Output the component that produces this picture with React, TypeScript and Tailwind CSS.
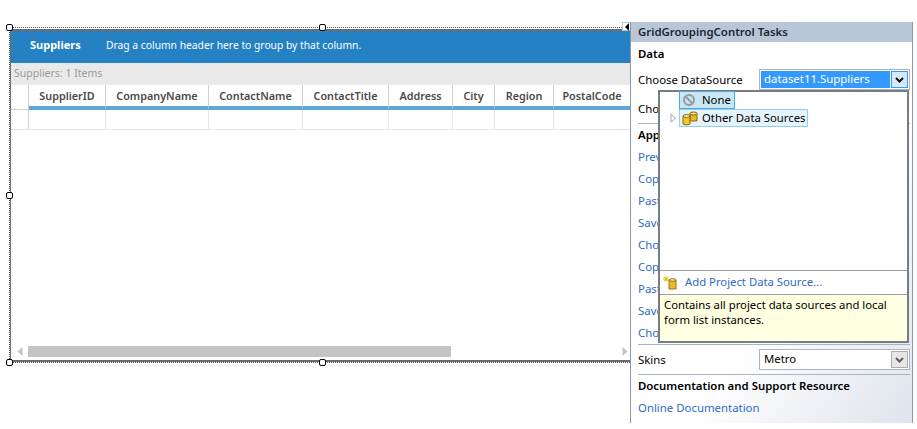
const columns = [
  { name: 'SupplierID', width: 'w-[77px]' },
  { name: 'CompanyName', width: 'w-[103px]' },
  { name: 'ContactName', width: 'w-[94px]' },
  { name: 'ContactTitle', width: 'w-[86px]' },
  { name: 'Address', width: 'w-[64px]' },
  { name: 'City', width: 'w-[42px]' },
  { name: 'Region', width: 'w-[59px]' },
  { name: 'PostalCode', width: 'w-[77px]' },
];

const hiddenLinks = ['Preview', 'Copy', 'Paste', 'Save', 'Choose', 'Copy', 'Paste', 'Save', 'Choose'];

function Handle({ className }: { className: string }) {
  return <div className={`absolute w-[7px] h-[7px] bg-white border border-black rounded-[2px] ${className}`} />;
}

function Chevron({ color }: { color: string }) {
  return (
    <svg width="9" height="6" viewBox="0 0 9 6">
      <path d="M1 1 L4.5 4.5 L8 1" fill="none" stroke={color} strokeWidth="2" />
    </svg>
  );
}

function Combo({ selected, value }: { selected?: boolean; value: string }) {
  return (
    <div className="w-[151px] h-[21px] bg-white border border-[#abb4c1] flex items-stretch p-px">
      <div className={`flex-1 pl-[3px] leading-[15px] ${selected ? 'bg-[#3399ff] text-white' : 'text-black'}`}>{value}</div>
      <div
        className={`w-[17px] flex items-center justify-center border ml-px ${
          selected ? 'bg-[#d5e9fa] border-[#3399ff]' : 'bg-[#e6e6e6] border-[#acacac]'
        }`}
      >
        <Chevron color={selected ? '#111' : '#606060'} />
      </div>
    </div>
  );
}

function Grid() {
  return (
    <div className="relative w-[621px] h-[336px] border-t border-l border-dotted border-[#555] pt-px text-[10.5px]">
      <div className="w-full h-[333px] border-t-2 border-l border-b-2 border-[#6d6d6d] bg-white flex flex-col">
        <div className="h-[32px] bg-[#2481c4] flex items-center text-white pl-[19px] pb-[3px] shrink-0">
          <span className="font-bold text-[11px] w-[76px]">Suppliers</span>
          <span className="text-[10.3px]">Drag a column header here to group by that column.</span>
        </div>
        <div className="h-[22px] bg-[#e9e9e9] text-[#9a9a9a] pl-[3px] leading-[20px] shrink-0">Suppliers: 1 Items</div>
        <div className="flex h-[25px] shrink-0 text-[10.8px]">
          <div className="w-[18px] shrink-0 border-r border-[#cfcfcf] border-b" />
          {columns.map((c) => (
            <div
              key={c.name}
              className={`${c.width} shrink-0 border-r border-[#cfcfcf] border-b-4 border-b-[#5ba7d8] text-center font-semibold text-[#4a4a4a] leading-[21px]`}
            >
              {c.name}
            </div>
          ))}
        </div>
        <div className="flex h-[20px] shrink-0 border-b border-[#e3e3e3]">
          <div className="w-[18px] shrink-0 border-r border-[#d4d4d4]" />
          {columns.map((c) => (
            <div key={c.name} className={`${c.width} shrink-0 border-r border-[#e8e8e8]`} />
          ))}
        </div>
        <div className="flex-1" />
        <div className="h-[11px] mb-[3px] flex items-center shrink-0 pl-[6px] pr-[2px]">
          <svg width="6" height="9" viewBox="0 0 6 9">
            <path d="M5.5 0 L0.5 4.5 L5.5 9 Z" fill="#c4c4c4" />
          </svg>
          <div className="ml-[5px] w-[423px] h-[11px] bg-[#c4c4c4]" />
          <div className="flex-1" />
          <svg width="6" height="9" viewBox="0 0 6 9">
            <path d="M0.5 0 L5.5 4.5 L0.5 9 Z" fill="#c4c4c4" />
          </svg>
        </div>
      </div>
      <div className="border-b border-dotted border-[#555] h-px" />
      <Handle className="-left-[4px] -top-[4px]" />
      <Handle className="left-[309px] -top-[4px]" />
      <Handle className="-left-[4px] top-[164px]" />
      <Handle className="-left-[4px] top-[331px]" />
      <Handle className="left-[309px] top-[331px]" />
      <div className="absolute -right-[2px] -top-[6px] w-[10px] h-[9px] bg-white border border-[#b9c6d8] flex items-center justify-center">
        <svg width="5" height="8" viewBox="0 0 5 8">
          <path d="M4 0 L0 4 L4 8 Z" fill="#000" />
        </svg>
      </div>
    </div>
  );
}

function NoneIcon() {
  return (
    <svg width="14" height="14" viewBox="0 0 14 14" className="shrink-0">
      <circle cx="7" cy="7" r="5" fill="none" stroke="#9a9a9a" strokeWidth="2" />
      <path d="M3.5 3.5 L10.5 10.5" stroke="#9a9a9a" strokeWidth="2" />
    </svg>
  );
}

function CylinderIcon() {
  return (
    <svg width="16" height="15" viewBox="0 0 16 15" className="shrink-0">
      <path d="M8 2 H15 V10 H8 Z" fill="#e8b923" stroke="#8a6a10" strokeWidth="1" />
      <ellipse cx="11.5" cy="2.5" rx="3.5" ry="1.5" fill="#f7e48a" stroke="#8a6a10" />
      <path d="M1 5 H8 V13 Q4.5 15 1 13 Z" fill="#f0c630" stroke="#8a6a10" strokeWidth="1" />
      <ellipse cx="4.5" cy="5" rx="3.5" ry="1.5" fill="#faeb9c" stroke="#8a6a10" />
    </svg>
  );
}

function AddSourceIcon() {
  return (
    <svg width="14" height="14" viewBox="0 0 14 14" className="shrink-0">
      <path d="M6 4 H13 V13 H6 Z" fill="#eeb62c" stroke="#9a7416" />
      <ellipse cx="9.5" cy="4" rx="3.5" ry="1.3" fill="#f8e690" stroke="#9a7416" />
      <path d="M3 0 V6 M0 3 H6 M1 1 L5 5 M5 1 L1 5" stroke="#d9c400" strokeWidth="1" />
    </svg>
  );
}

function DataSourcePopup() {
  return (
    <div className="absolute left-[27px] top-[68px] w-[251px] h-[253px] border-2 border-[#777d85] bg-white flex flex-col text-[11.3px]">
      <div className="flex-1 -mt-px pl-[19px]">
        <div className="w-[56px] h-[18px] bg-[#c9e6f5] border border-[#4aa9d8] flex items-center gap-[6px] pl-[2px]">
          <NoneIcon />
          <span className="leading-[14px]">None</span>
        </div>
        <div className="flex items-center -ml-[10px]">
          <svg width="10" height="10" viewBox="0 0 10 10" className="shrink-0">
            <path d="M2 1 L6.5 5 L2 9 Z" fill="none" stroke="#a6a6a6" />
          </svg>
          <div className="w-[129px] h-[18px] bg-[#e5f3fb] border border-[#90cdf0] flex items-center gap-[4px] pl-[2px]">
            <CylinderIcon />
            <span className="whitespace-nowrap leading-[14px]">Other Data Sources</span>
          </div>
        </div>
      </div>
      <div className="h-[24px] border-t border-[#a0a0a0] flex items-center pl-[3px] gap-[8px] text-[#2e6bc6]">
        <AddSourceIcon />
        <span>Add Project Data Source...</span>
      </div>
      <div className="h-[47px] border-t border-[#a0a0a0] bg-[#ffffe1] px-[4px] pt-[2px] leading-[15px] text-black">
        Contains all project data sources and local form list instances.
      </div>
    </div>
  );
}

function TasksPanel() {
  return (
    <div className="relative mt-[22px] w-[283px] h-[401px] border-x border-[#8b96a6] bg-gradient-to-br from-white from-60% to-[#dfe3ec] flex flex-col text-black">
      <div className="h-[20px] bg-[#b9c6d8] pl-[7px] font-semibold leading-[19px] text-[#1c2530] shrink-0">
        GridGroupingControl Tasks
      </div>
      <div className="mx-[7px] flex-1 flex flex-col">
        <div className="font-semibold mt-[3px] h-[18px] leading-[18px]">Data</div>
        <div className="flex items-center justify-between h-[21px] mt-[6px] -mr-[5px]">
          <span className="leading-[21px]">Choose DataSource</span>
          <Combo selected value="dataset11.Suppliers" />
        </div>
        <div className="h-[18px] mt-[10px] leading-[18px]">Choose Table</div>
        <div className="border-b border-[#abb4c1] h-[6px] -mr-[5px]" />
        <div className="font-semibold mt-[2px] h-[18px] leading-[18px]">Appearance</div>
        <div className="mt-[2px] flex flex-col">
          {hiddenLinks.map((l, i) => (
            <div key={i} className="h-[22px] leading-[22px] text-[#2e6bc6]">
              {l}
            </div>
          ))}
        </div>
        <div className="border-b border-[#abb4c1] -mr-[5px] h-[1px]" />
        <div className="flex items-center justify-between h-[21px] mt-[4px] -mr-[5px]">
          <span>Skins</span>
          <Combo value="Metro" />
        </div>
        <div className="border-b border-[#abb4c1] -mr-[5px] mt-[4px]" />
        <div className="font-semibold mt-[2px] h-[18px] leading-[18px]">Documentation and Support Resource</div>
        <div className="mt-[4px] h-[18px] leading-[18px] text-[#2e6bc6]">Online Documentation</div>
      </div>
      <DataSourcePopup />
    </div>
  );
}

export default function App() {
  return (
    <div className="w-[917px] h-[429px] bg-white flex items-start overflow-hidden text-[11.4px] font-['Noto_Sans',sans-serif]">
      <div className="pt-[27px] pl-[9px]">
        <Grid />
      </div>
      <TasksPanel />
    </div>
  );
}
